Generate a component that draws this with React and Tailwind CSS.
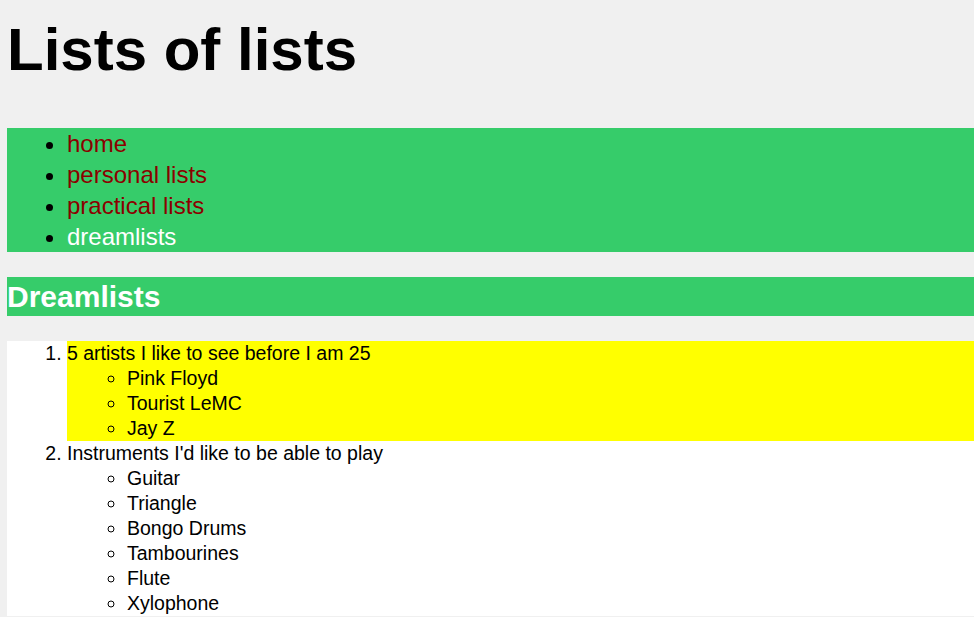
import React from 'react';

const nav = [
  { label: 'home', current: false },
  { label: 'personal lists', current: false },
  { label: 'practical lists', current: false },
  { label: 'dreamlists', current: true },
];

const dreams = [
  {
    title: '5 artists I like to see before I am 25',
    items: ['Pink Floyd', 'Tourist LeMC', 'Jay Z'],
    highlight: true,
  },
  {
    title: "Instruments I'd like to be able to play",
    items: ['Guitar', 'Triangle', 'Bongo Drums', 'Tambourines', 'Flute', 'Xylophone'],
    highlight: false,
  },
];

export default function App() {
  return (
    <div className="w-[974px] h-[617px] overflow-hidden bg-[#f0f0f0] font-['Liberation_Sans',Arial,sans-serif] text-black">
      <div className="w-[1010px] pl-[7px]">
        {/* page title */}
        <h1 className="mt-[16px] mb-[45px] text-[60px] leading-[67px] font-bold">Lists of lists</h1>

        {/* navigation */}
        <ul className="list-disc bg-[#36cc6a] pl-[60px] text-[24px] leading-[31px]">
          {nav.map((n) => (
            <li key={n.label}>
              <a href="#" className={n.current ? 'text-white' : 'text-[#8b0000]'}>
                {n.label}
              </a>
            </li>
          ))}
        </ul>

        <h2 className="mt-[25px] mb-[25px] bg-[#36cc6a] text-white text-[30px] font-bold leading-[39px]">
          Dreamlists
        </h2>

        {/* the lists */}
        <ol className="list-decimal bg-white pl-[60px] text-[19.5px] leading-[25px]">
          {dreams.map((d) => (
            <li key={d.title} className={d.highlight ? 'bg-[#ffff00]' : ''}>
              {d.title}
              <ul className="list-[circle] pl-[60px]">
                {d.items.map((it) => (
                  <li key={it}>{it}</li>
                ))}
              </ul>
            </li>
          ))}
        </ol>
      </div>
    </div>
  );
}
